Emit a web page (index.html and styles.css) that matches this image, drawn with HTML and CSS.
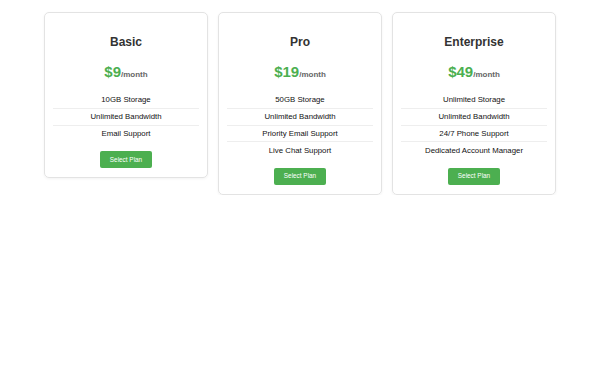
FILE: index.html
```html
<!DOCTYPE html>
<html lang="en">
<head>
<meta charset="utf-8">
<title>Pricing Plans</title>
<link rel="stylesheet" href="styles.css">
</head>
<body>
<div class="plans">
  <div class="card">
    <h2 class="title">Basic</h2>
    <div class="price">$9<span class="per">/month</span></div>
    <ul class="features">
      <li>10GB Storage</li>
      <li>Unlimited Bandwidth</li>
      <li>Email Support</li>
    </ul>
    <button class="btn">Select Plan</button>
  </div>
  <div class="card">
    <h2 class="title">Pro</h2>
    <div class="price">$19<span class="per">/month</span></div>
    <ul class="features">
      <li>50GB Storage</li>
      <li>Unlimited Bandwidth</li>
      <li>Priority Email Support</li>
      <li>Live Chat Support</li>
    </ul>
    <button class="btn">Select Plan</button>
  </div>
  <div class="card">
    <h2 class="title">Enterprise</h2>
    <div class="price">$49<span class="per">/month</span></div>
    <ul class="features">
      <li>Unlimited Storage</li>
      <li>Unlimited Bandwidth</li>
      <li>24/7 Phone Support</li>
      <li>Dedicated Account Manager</li>
    </ul>
    <button class="btn">Select Plan</button>
  </div>
</div>
</body>
</html>
```

FILE: styles.css
```css
html, body {
  margin: 0;
  padding: 0;
  background: #fff;
  font-family: "Liberation Sans", Arial, sans-serif;
}

.plans {
  display: flex;
  justify-content: center;
  align-items: flex-start;
  gap: 10px;
  padding-top: 12px;
}

.card {
  box-sizing: border-box;
  width: 164px;
  border: 1px solid #e3e3e3;
  border-radius: 5px;
  box-shadow: 0 1px 3px rgba(0, 0, 0, 0.05);
  padding: 22px 8px 9px;
  text-align: center;
  display: flex;
  flex-direction: column;
  align-items: center;
}

.title {
  margin: 0;
  font-size: 12px;
  line-height: 14px;
  font-weight: bold;
  color: #333;
}

.price {
  margin-top: 14px;
  font-size: 15px;
  line-height: 17px;
  font-weight: bold;
  color: #4caf50;
}

.per {
  font-size: 8px;
  font-weight: bold;
  color: #666;
}

.features {
  list-style: none;
  margin: 9px 0 0;
  padding: 0;
  align-self: stretch;
}

.features li {
  font-size: 7.8px;
  line-height: 9px;
  padding: 3.4px 0;
  color: #111;
  border-bottom: 1px solid #eee;
}

.features li:last-child {
  border-bottom: 0;
}

.btn {
  margin-top: 10px;
  border: 0;
  border-radius: 2px;
  background: #4caf50;
  color: #fff;
  font-family: "Liberation Sans", Arial, sans-serif;
  font-size: 6.4px;
  line-height: 8px;
  padding: 4.3px 10px;
  cursor: pointer;
}
```
